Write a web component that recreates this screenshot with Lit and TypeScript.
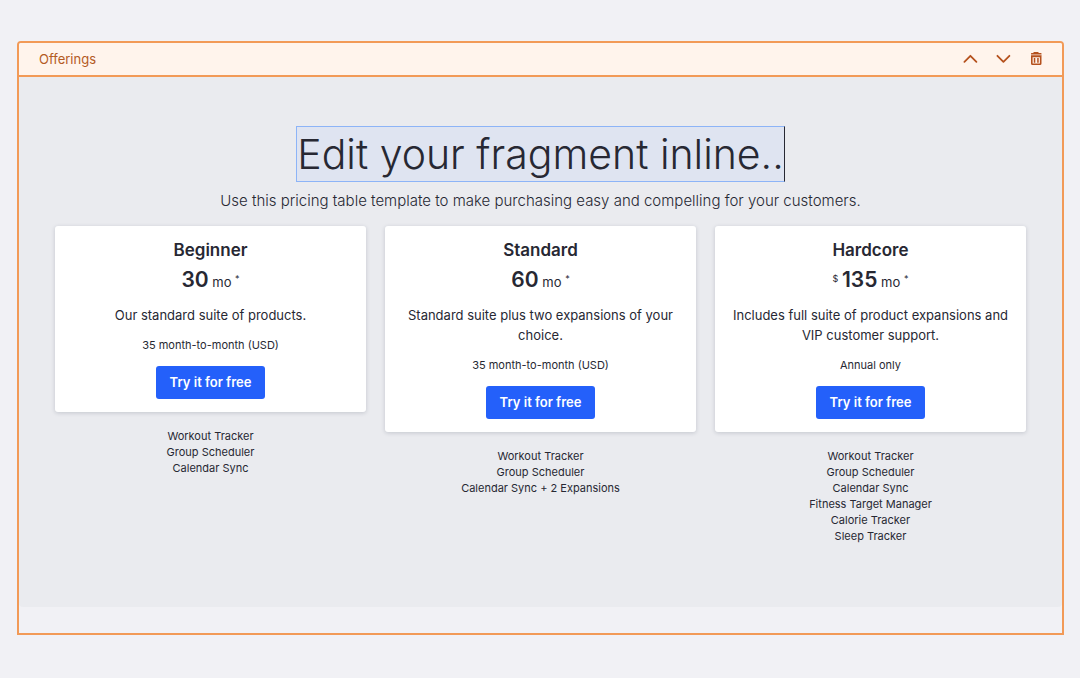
import { LitElement, html, css, nothing } from "lit";
import { customElement, property } from "lit/decorators.js";

interface Plan {
  name: string;
  currency?: string;
  price: string;
  description: string;
  terms: string;
  features: string[];
}

const PLANS: Plan[] = [
  {
    name: "Beginner",
    price: "30",
    description: "Our standard suite of products.",
    terms: "35 month-to-month (USD)",
    features: ["Workout Tracker", "Group Scheduler", "Calendar Sync"],
  },
  {
    name: "Standard",
    price: "60",
    description: "Standard suite plus two expansions of your choice.",
    terms: "35 month-to-month (USD)",
    features: ["Workout Tracker", "Group Scheduler", "Calendar Sync + 2 Expansions"],
  },
  {
    name: "Hardcore",
    currency: "$",
    price: "135",
    description: "Includes full suite of product expansions and VIP customer support.",
    terms: "Annual only",
    features: [
      "Workout Tracker",
      "Group Scheduler",
      "Calendar Sync",
      "Fitness Target Manager",
      "Calorie Tracker",
      "Sleep Tracker",
    ],
  },
];

@customElement("plan-column")
export class PlanColumn extends LitElement {
  @property({ attribute: false }) plan!: Plan;

  static styles = css`
    :host {
      display: block;
      text-align: center;
      color: #272833;
    }
    .card {
      background: #fff;
      border-radius: 3px;
      box-shadow: 0 1px 4px rgba(30, 40, 60, 0.18);
      padding: 12px 16px 13px;
    }
    .name {
      margin: 0;
      font-size: 17px;
      line-height: 24px;
      font-weight: 600;
    }
    .price {
      margin: 4px 0 9px;
      font-size: 13px;
      line-height: 28px;
    }
    .amount {
      font-size: 21px;
      font-weight: 600;
    }
    .mark {
      font-size: 9px;
      line-height: 0;
      vertical-align: 5px;
    }
    .description {
      margin: 0 0 12px;
      font-size: 13px;
      line-height: 20px;
    }
    .terms {
      margin: 0 0 13px;
      font-size: 11px;
      line-height: 16px;
    }
    .action {
      font: 600 13px/17px Inter, "Liberation Sans", sans-serif;
      color: #fff;
      background: #2460fa;
      border: 0;
      border-radius: 3px;
      padding: 8px 14px;
      display: block;
      margin: 0 auto;
      cursor: pointer;
    }
    .features {
      list-style: none;
      margin: 16px 0 0;
      padding: 0;
      font-size: 11px;
      line-height: 16px;
    }
  `;

  render() {
    const p = this.plan;
    return html`
      <article class="card">
        <h2 class="name">${p.name}</h2>
        <p class="price">
          ${p.currency ? html`<span class="mark">${p.currency}</span>` : nothing}
          <span class="amount">${p.price}</span> mo <span class="mark">*</span>
        </p>
        <p class="description">${p.description}</p>
        <p class="terms">${p.terms}</p>
        <button class="action" type="button">Try it for free</button>
      </article>
      <ul class="features">
        ${p.features.map((f) => html`<li>${f}</li>`)}
      </ul>
    `;
  }
}

@customElement("app-root")
export class AppRoot extends LitElement {
  static styles = css`
    :host {
      display: block;
      box-sizing: border-box;
      min-height: 100vh;
      padding: 41px 16px 43px 17px;
      background: #f1f1f5;
      font-family: Inter, "Liberation Sans", sans-serif;
      color: #272833;
    }
    .fragment {
      border: 2px solid #f29a57;
      border-radius: 4px 4px 0 0;
      padding-bottom: 26px;
    }
    .toolbar {
      display: flex;
      align-items: center;
      justify-content: space-between;
      height: 32px;
      padding: 0 16px 0 20px;
      background: #fff4ec;
      border-bottom: 2px solid #f29a57;
      border-radius: 2px 2px 0 0;
      color: #b35a24;
      font-size: 13px;
    }
    .actions {
      display: flex;
      gap: 13px;
    }
    .tool {
      display: flex;
      padding: 2px;
      border: 0;
      background: none;
      color: #b5511d;
      cursor: pointer;
    }
    .icon {
      display: block;
      width: 16px;
      height: 16px;
    }
    .pricing {
      padding: 49px 36px 63px;
      background: #eaebef;
      border-radius: 0 0 4px 4px;
      text-align: center;
    }
    .title {
      width: fit-content;
      margin: 0 auto;
      border: 1px solid #8db4f7;
      border-right-color: #272833;
      background: #dfe4f1;
      font-size: 41px;
      line-height: 54px;
      font-weight: 300;
      outline: none;
    }
    .lead {
      margin: 7px 0 14px;
      font-size: 15px;
      line-height: 23px;
      font-weight: 300;
    }
    .plans {
      display: grid;
      grid-template-columns: repeat(3, 1fr);
      gap: 19px;
      align-items: start;
    }
  `;

  render() {
    return html`
      <section class="fragment">
        <header class="toolbar">
          <span>Offerings</span>
          <div class="actions">
            <button class="tool" type="button" aria-label="Move up">
              <svg class="icon" viewBox="0 0 16 16" fill="none" stroke="currentColor" stroke-width="1.8" stroke-linecap="round" stroke-linejoin="round">
                <path d="M2.400 10.800 L8.400 4.800 L14.400 10.800" />
              </svg>
            </button>
            <button class="tool" type="button" aria-label="Move down">
              <svg class="icon" viewBox="0 0 16 16" fill="none" stroke="currentColor" stroke-width="1.8" stroke-linecap="round" stroke-linejoin="round">
                <path d="M2.400 4.800 L8.400 10.800 L14.400 4.800" />
              </svg>
            </button>
            <button class="tool" type="button" aria-label="Delete">
              <svg class="icon" viewBox="0 0 16 16" fill="currentColor">
                <path d="M6 1h4l1 1h2a.5 .5 0 0 1 .5 .5V3.300H3V2.500A.5 .5 0 0 1 3.500 2H5z" />
                <path d="M3 3.300h10.500V5H3z" opacity=".5" />
                <path fill-rule="evenodd" d="M3 4.600h10.500V12.500a1.500 1.500 0 0 1-1.500 1.500H4.500A1.500 1.500 0 0 1 3 12.500zM4.600 6.200v6.200h7.300V6.200z" />
                <path d="M5.800 6.900h1.500v4.900H5.800zM9.200 6.900h1.500v4.900H9.200z" />
              </svg>
            </button>
          </div>
        </header>
        <div class="pricing">
          <h1 class="title" contenteditable="true">Edit your fragment inline..</h1>
          <p class="lead">
            Use this pricing table template to make purchasing easy and compelling for your customers.
          </p>
          <div class="plans">
            ${PLANS.map((plan) => html`<plan-column .plan=${plan}></plan-column>`)}
          </div>
        </div>
      </section>
    `;
  }
}
